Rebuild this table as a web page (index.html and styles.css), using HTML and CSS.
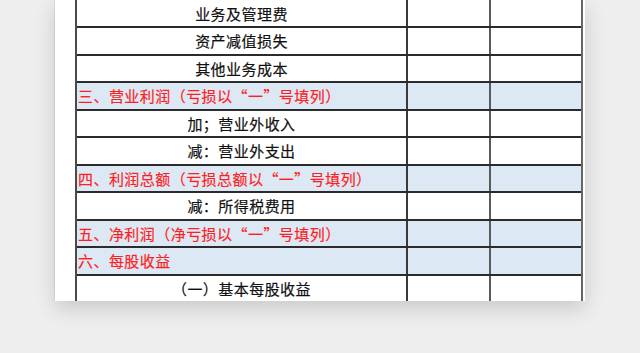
FILE: index.html
```html
<!DOCTYPE html>
<html lang="zh">
<head>
<meta charset="utf-8">
<link rel="stylesheet" href="styles.css">
</head>
<body>
<div class="paper">
  <div class="sheet">
    <div class="row first"><div class="cell name">业务及管理费</div><div class="cell"></div><div class="cell last"></div></div>
    <div class="row"><div class="cell name">资产减值损失</div><div class="cell"></div><div class="cell last"></div></div>
    <div class="row"><div class="cell name">其他业务成本</div><div class="cell"></div><div class="cell last"></div></div>
    <div class="row sec"><div class="cell name">三、营业利润（亏损以“一”号填列）</div><div class="cell"></div><div class="cell last"></div></div>
    <div class="row"><div class="cell name">加；营业外收入</div><div class="cell"></div><div class="cell last"></div></div>
    <div class="row"><div class="cell name">减：营业外支出</div><div class="cell"></div><div class="cell last"></div></div>
    <div class="row sec"><div class="cell name">四、利润总额（亏损总额以“一”号填列）</div><div class="cell"></div><div class="cell last"></div></div>
    <div class="row"><div class="cell name">减：所得税费用</div><div class="cell"></div><div class="cell last"></div></div>
    <div class="row sec"><div class="cell name">五、净利润（净亏损以“一”号填列）</div><div class="cell"></div><div class="cell last"></div></div>
    <div class="row sec"><div class="cell name">六、每股收益</div><div class="cell"></div><div class="cell last"></div></div>
    <div class="row end"><div class="cell name">（一）基本每股收益</div><div class="cell"></div><div class="cell last"></div></div>
  </div>
</div>
</body>
</html>
```
FILE: styles.css
```css
html, body {
  margin: 0;
  padding: 0;
  background: #eeeeee;
  width: 640px;
  height: 353px;
  overflow: hidden;
}
.paper {
  margin-left: 55px;
  width: 530px;
  height: 301px;
  background: #ffffff;
  box-shadow: 0 7px 20px rgba(0, 0, 0, 0.16), -1px 0 0 #dcdcdc;
  padding-left: 20px;
  box-sizing: border-box;
  overflow: hidden;
}
.sheet {
  width: 508px;
  border-left: 2px solid #4a4a4a;
  border-right: 2px solid #666666;
  box-sizing: border-box;
  font-family: "Noto Sans CJK SC", "Microsoft YaHei", sans-serif;
  font-size: 15px;
  letter-spacing: 0.45px;
  color: #111111;
}
.row {
  display: grid;
  grid-template-columns: 329px 83px 94px;
  height: 27.5px;
  box-sizing: border-box;
  border-bottom: 2px solid #2b2b2b;
}
.row.first { height: 28px; }
.row.end { height: 25.5px; border-bottom: none; }
.cell {
  border-left: 2px solid #3a3a3a;
  display: flex;
  align-items: center;
  justify-content: center;
  line-height: 1;
}
.cell.name {
  border-left: none;
  -webkit-text-stroke: 0.2px currentColor;
}
.cell.last {
  border-left-color: #5a5a5a;
}
.row.sec {
  background: #dde8f5;
}
.row.sec .name {
  justify-content: flex-start;
  padding-left: 1px;
  color: #ff1f1f;
}
```
